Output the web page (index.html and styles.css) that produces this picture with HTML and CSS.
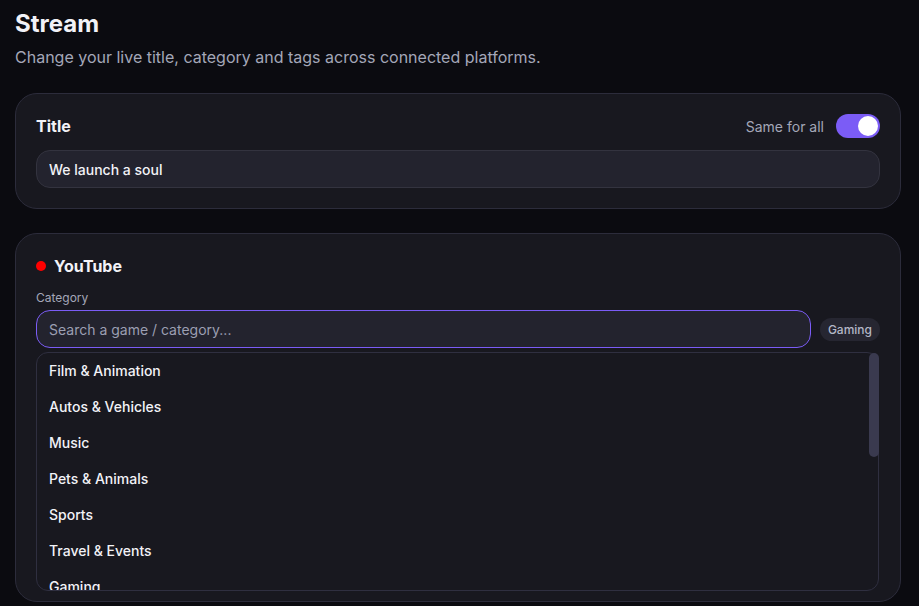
FILE: index.html
```html
<!DOCTYPE html>
<html>

<head>
  <meta charset="UTF-8">
  <meta name="viewport" content="width=device-width, initial-scale=1.0">
  <link rel="stylesheet" href="styles.css">
</head>

<body>
  <div class="page">
    <h1 class="page-title">Stream</h1>
    <p class="page-sub">Change your live title, category and tags across connected platforms.</p>

    <!-- Titulo compartido -->
    <section class="card">
      <div class="card-head">
        <span class="card-name">Title</span>
        <label class="same-all">
          <span>Same for all</span>
          <span class="toggle on"><span class="knob"></span></span>
        </label>
      </div>
      <input class="field" type="text" value="We launch a soul">
    </section>

    <!-- Plataforma: YouTube -->
    <section class="card card-open">
      <div class="platform">
        <span class="dot"></span>
        <span class="card-name">YouTube</span>
      </div>

      <label class="small-label">Category</label>
      <div class="cat-row">
        <input class="field focus" type="text" placeholder="Search a game / category...">
        <span class="chip">Gaming</span>
      </div>

      <div class="dropdown-wrap">
        <ul class="dropdown">
          <li>Film &amp; Animation</li>
          <li>Autos &amp; Vehicles</li>
          <li>Music</li>
          <li>Pets &amp; Animals</li>
          <li>Sports</li>
          <li>Travel &amp; Events</li>
          <li>Gaming</li>
          <li>People &amp; Blogs</li>
          <li>Comedy</li>
          <li>Entertainment</li>
          <li>News &amp; Politics</li>
          <li>Howto &amp; Style</li>
          <li>Education</li>
          <li>Science &amp; Technology</li>
          <li>Nonprofits &amp; Activism</li>
        </ul>
        <span class="scroll-thumb"></span>
      </div>
    </section>
  </div>
</body>

</html>
```

FILE: styles.css
```css
/* Base */
body {
  margin: 0;
  background-color: #0b0b10;
  color: #f2f2f7;
  font-family: Inter, "Noto Sans", sans-serif;
}

.page {
  width: 886px;
  padding: 8px 0 0 15px;
}

.page-title {
  margin: 0;
  font-size: 24px;
  line-height: 32px;
  font-weight: 700;
}

.page-sub {
  margin: 5px 0 24px;
  font-size: 16px;
  line-height: 24px;
  color: #a4a7b8;
}

/* Tarjetas */
.card {
  display: flex;
  flex-direction: column;
  padding: 20px;
  margin-bottom: 24px;
  background-color: #18181f;
  border: 1px solid #2c2c3b;
  border-radius: 22px;
}

.card-open {
  padding-bottom: 10px;
}

.card-head {
  display: flex;
  align-items: center;
  justify-content: space-between;
  height: 24px;
  margin-bottom: 12px;
}

.card-name {
  font-size: 16px;
  line-height: 24px;
  font-weight: 700;
}

.same-all {
  display: flex;
  align-items: center;
  gap: 12px;
  font-size: 14px;
  color: #a4a7b8;
}

.toggle {
  display: flex;
  align-items: center;
  width: 44px;
  height: 24px;
  padding: 2px;
  box-sizing: border-box;
  border-radius: 12px;
  background-color: #3a3a4a;
}

.toggle.on {
  justify-content: flex-end;
  background-color: #7b5cf6;
}

.knob {
  width: 20px;
  height: 20px;
  border-radius: 50%;
  background-color: #fff;
}

/* Campos */
.field {
  box-sizing: border-box;
  width: 100%;
  height: 38px;
  padding: 0 12px;
  background-color: #23232e;
  border: 1px solid #33333f;
  border-radius: 14px;
  color: #f2f2f7;
  font-family: inherit;
  font-size: 14px;
  font-weight: 500;
  outline: none;
}

.field::placeholder {
  color: #9c9fb2;
  font-weight: 400;
}

.field.focus {
  border-color: #7b5cf6;
}

.platform {
  display: flex;
  align-items: center;
  gap: 8px;
  height: 24px;
}

.dot {
  width: 10px;
  height: 10px;
  border-radius: 50%;
  background-color: #ff0000;
}

.small-label {
  display: block;
  margin: 12px 0 4px;
  font-size: 12px;
  line-height: 16px;
  color: #a4a7b8;
}

.cat-row {
  display: flex;
  align-items: center;
  gap: 9px;
}

.chip {
  flex-shrink: 0;
  padding: 4px 8px;
  border-radius: 12px;
  background-color: #262631;
  color: #b4b7c6;
  font-size: 12px;
  line-height: 15px;
  font-weight: 500;
}

/* Lista desplegable */
.dropdown-wrap {
  position: relative;
  margin: 4px 1px 0 0;
}

.dropdown {
  height: 239px;
  box-sizing: border-box;
  margin: 0;
  padding: 0;
  list-style: none;
  overflow: hidden;
  background-color: #18181f;
  border: 1px solid #2f2f40;
  border-radius: 12px;
}

.dropdown li {
  height: 36px;
  padding: 0 12px;
  font-size: 14px;
  line-height: 36px;
  font-weight: 500;
  color: #f2f2f7;
}

.scroll-thumb {
  position: absolute;
  top: 1px;
  right: 0;
  width: 10px;
  height: 104px;
  border-radius: 5px;
  background-color: #3a3a4f;
}
```
